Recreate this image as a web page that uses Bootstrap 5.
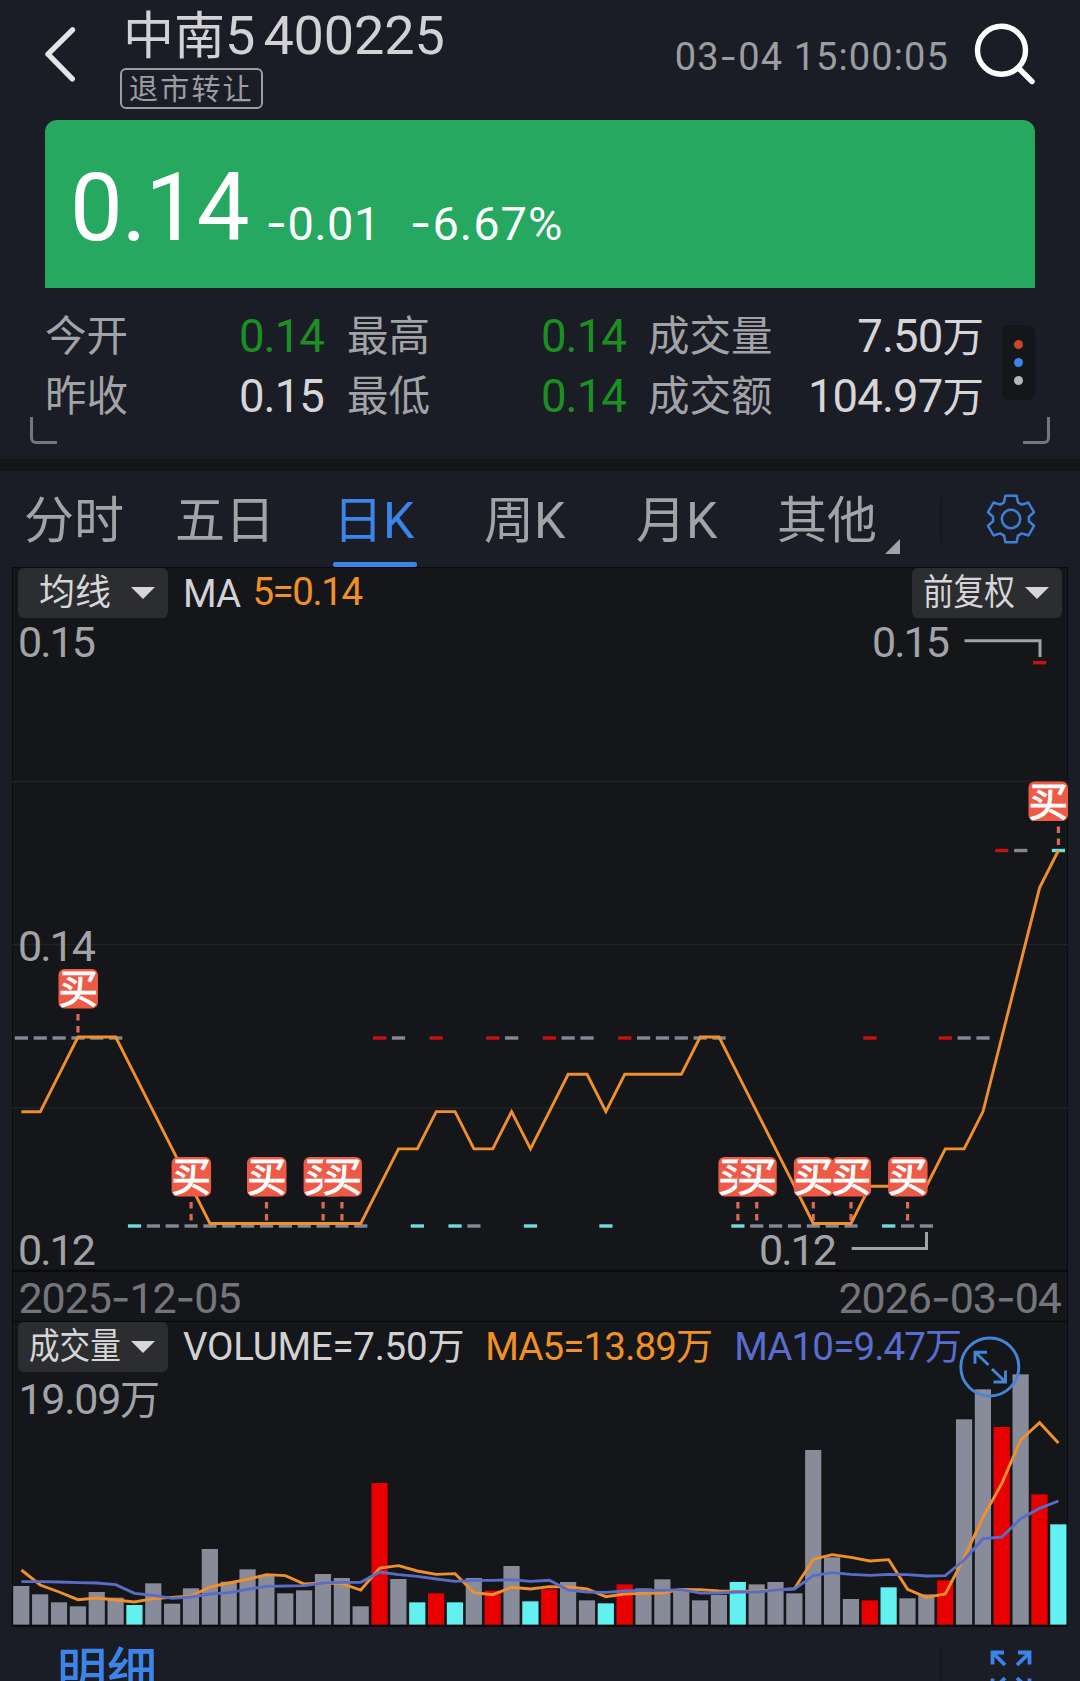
<!DOCTYPE html>
<html lang="zh-CN">
<head>
<meta charset="utf-8">
<meta name="viewport" content="width=device-width, initial-scale=1">
<title>中南5 400225</title>
<link href="https://cdn.jsdelivr.net/npm/bootstrap@5.3.0/dist/css/bootstrap.min.css" rel="stylesheet">
<style>
  body{background:#1b1d26;color:#d2d2d4;font-family:Roboto,"Noto Sans CJK SC",sans-serif;line-height:1;height:1681px;overflow:hidden}
  .screen{width:1080px;height:1681px}
  .dash{font-family:Inter,sans-serif}
  .top-bar{height:120px;padding:0 45px 0 44px}
  .back-icon{margin-top:26px}
  .title-col{margin-left:44px}
  .stock-name{font-size:51px;height:64px;line-height:72px;padding-left:3px;color:#d2d2d4;white-space:nowrap}
  .stock-name .num{font-size:54px}
  .stock-name .code{margin-left:8px;letter-spacing:-.1px}
  .stock-tag{width:143px;height:41px;margin-top:4px;border:2px solid #9c9da2;border-radius:6px;font-size:29px;letter-spacing:2.2px;line-height:40px;padding-left:7px;color:#9c9da2;white-space:nowrap}
  .clock{font-size:38px;letter-spacing:1.1px;color:#9c9da1;margin-top:37px;margin-right:24px;white-space:nowrap}
  .search-icon{margin-top:22px}
  .quote{height:168px;margin:0 45px;background:#26a861;border-radius:12px 12px 0 0;color:#fff;padding:0 0 0 25px}
  .quote .price{font-size:94px;letter-spacing:-1.2px;line-height:177px}
  .quote .chg{font-size:47px;letter-spacing:.4px;margin-left:17px}
  .quote .pct{font-size:47px;margin-left:29px;letter-spacing:1px}
  .stats{height:171px;padding:0 30px}
  .stats-inner{padding:19px 0 0 15px;height:148px}
  .stat-a{width:279px;margin-right:23px}
  .stat-b{width:279px;margin-right:22px}
  .stat-c{width:335px}
  .stat-line{height:60px}
  .lbl{font-size:41.5px;color:#a2a3a7}
  .val{font-size:45.5px;color:#d6d6d8;letter-spacing:-.9px}
  .val .wan{font-size:41.5px}
  .green-t{color:#1b8f22}
  .dots{width:33px;height:75px;margin:18px 0 0 19px;background:#15161a;border-radius:6px}
  .dots i{display:block;width:9.5px;height:9.5px;border-radius:50%;margin:4.25px auto}
  .corner{width:27px;height:27px;border-bottom:3px solid #75767b;margin-top:-19px}
  .corner.l{border-left:3px solid #75767b;border-bottom-left-radius:6px}
  .corner.r{border-right:3px solid #75767b;border-bottom-right-radius:6px}
  .band{height:12px;background:#15161a}
  .tabs{height:96px;font-size:50px;color:#a2a3a7;padding-left:24px}
  .tab{height:96px;line-height:100px;white-space:nowrap}
  .tab.on{color:#3d84e8;position:relative}
  .tab.on::after{content:"";position:absolute;left:0;width:84px;height:5px;bottom:0;border-radius:2px;background:#3d84e8}
  .vline{width:2px;height:45px;background:#15161a}
  .panel{width:1056px;margin-left:12px;background:#15161a;border:solid #0a0b0d;border-width:1px 1px 2px 1px;height:1060px}
  .p-head{height:50px;padding:0 5px}
  .pick{width:150px;height:50px;border-radius:6px;background:#2c2d31;color:#d6d6d8;font-size:36px;border:0;white-space:nowrap}
  .pick b{font-weight:400;display:block}
  .narrow{transform:scaleX(.85);transform-origin:0 50%;width:92px}
  .lg{font-size:38.5px;white-space:nowrap;letter-spacing:-.85px}
  .lg .wan{font-size:37px}
  .or{color:#f09125}.bl{color:#5a6dcf}
  .chart{display:block;margin-left:-1px}
  .foot-title{font-size:50px;font-weight:500;color:#3d84e8;margin:17px 0 0 57px;line-height:56px}
</style>
</head>
<body>
<div class="screen d-flex flex-column">
  <header class="top-bar d-flex align-items-start flex-shrink-0">
    <svg class="back-icon flex-shrink-0" width="32" height="58" viewBox="44 26 32 58"><path d="M72.5 29.8 48 54.2 72.3 78.8" fill="none" stroke="#e4e4e6" stroke-width="5.4" stroke-linecap="round" stroke-linejoin="round"/></svg>
    <div class="title-col">
      <div class="stock-name">中南<span class="num">5</span><span class="num code">400225</span></div>
      <div class="stock-tag">退市转让</div>
    </div>
    <div class="clock ms-auto">03<span class="dash">-</span>04 15:00:05</div>
    <svg class="search-icon flex-shrink-0" width="62" height="64" viewBox="973 22 62 64"><g fill="none" stroke="#fff" stroke-width="5.4" stroke-linecap="round"><circle cx="1001.5" cy="50.3" r="24"/><path d="M1019 68.5 1032 81.5"/></g></svg>
  </header>

  <section class="quote d-flex align-items-baseline flex-shrink-0">
    <div class="price">0.14</div><div class="chg"><span class="dash">-</span>0.01</div><div class="pct"><span class="dash">-</span>6.67%</div>
  </section>

  <section class="stats flex-shrink-0">
    <div class="stats-inner d-flex">
      <div class="stat-a">
        <div class="stat-line d-flex justify-content-between align-items-center"><span class="lbl">今开</span><span class="val green-t">0.14</span></div>
        <div class="stat-line d-flex justify-content-between align-items-center"><span class="lbl">昨收</span><span class="val">0.15</span></div>
      </div>
      <div class="stat-b">
        <div class="stat-line d-flex justify-content-between align-items-center"><span class="lbl">最高</span><span class="val green-t">0.14</span></div>
        <div class="stat-line d-flex justify-content-between align-items-center"><span class="lbl">最低</span><span class="val green-t">0.14</span></div>
      </div>
      <div class="stat-c">
        <div class="stat-line d-flex justify-content-between align-items-center"><span class="lbl">成交量</span><span class="val">7.50<span class="wan">万</span></span></div>
        <div class="stat-line d-flex justify-content-between align-items-center"><span class="lbl">成交额</span><span class="val">104.97<span class="wan">万</span></span></div>
      </div>
      <div class="dots d-flex flex-column justify-content-center"><i style="background:#c8452f"></i><i style="background:#3d84e8"></i><i style="background:#b4b5ba"></i></div>
    </div>
    <div class="d-flex justify-content-between pt-0"><div class="corner l"></div><div class="corner r"></div></div>
  </section>
  <div class="band flex-shrink-0"></div>

  <nav class="tabs d-flex align-items-center flex-shrink-0">
    <div class="tab" style="width:151px">分时</div>
    <div class="tab" style="width:158px">五日</div>
    <div class="tab on" style="width:151px">日K</div>
    <div class="tab" style="width:152px">周K</div>
    <div class="tab" style="width:141px">月K</div>
    <div class="tab d-flex" style="width:163px">其他<svg class="ms-2" width="15" height="96" viewBox="886 471 15 96"><path d="M901 539v15h-15z" fill="#a2a3a7"/></svg></div>
    <div class="vline"></div>
    <svg class="ms-auto" style="margin-right:43px" width="52" height="54" viewBox="-26 -27 52 54"><g id="gear" fill="none" stroke="#3f7fd6" stroke-width="2.5" stroke-linejoin="round"><circle r="9.2"/></g></svg>
  </nav>

  <main class="panel flex-shrink-0">
    <div class="p-head d-flex align-items-start">
      <div class="pick d-flex align-items-center"><b style="margin:0 20px 0 21px">均线</b><svg width="24" height="12"><path d="M0 0h24L12 12z" fill="#d6d6d8"/></svg></div>
      <div class="lg" style="margin:7px 0 0 15px">MA</div><div class="lg or" style="margin:5px 0 0 12px;letter-spacing:-1.4px">5=0.14</div>
      <div class="pick d-flex align-items-center ms-auto"><b class="narrow" style="margin:0 10px 0 11px">前复权</b><svg width="24" height="12"><path d="M0 0h24L12 12z" fill="#d6d6d8"/></svg></div>
    </div>
    <svg id="kline" class="chart" width="1056" height="704" viewBox="12 618 1056 704" font-family="Roboto,'Noto Sans CJK SC',sans-serif"></svg>
    <div class="p-head d-flex align-items-start">
      <div class="pick d-flex align-items-center"><b class="narrow" style="margin:0 10px 0 11px">成交量</b><svg width="24" height="12"><path d="M0 0h24L12 12z" fill="#d6d6d8"/></svg></div>
      <div class="lg" style="margin:6px 0 0 15px;letter-spacing:-.25px">VOLUME=7.50<span class="wan">万</span></div>
      <div class="lg or" style="margin:6px 0 0 21px">MA5=13.89<span class="wan">万</span></div>
      <div class="lg bl" style="margin:6px 0 0 22px">MA10=9.47<span class="wan">万</span></div>
    </div>
    <svg id="vol" class="chart" width="1056" height="253" viewBox="12 1372 1056 253" overflow="visible" font-family="Roboto,'Noto Sans CJK SC',sans-serif"></svg>
  </main>

  <footer class="d-flex align-items-start">
    <div class="foot-title">明细</div>
    <div class="vline ms-auto" style="margin-top:21px"></div>
    <svg style="margin:21px 46px 0 46px" width="46" height="46" viewBox="988 1648 46 46"><g fill="none" stroke="#3d84e8" stroke-width="3.8"><path d="M1005 1665 993 1653M1004 1652.500h-11.500v12M1017 1665l12.500-12M1018 1652.500h11.500v12M1005 1678l-12 12M1004 1690.500h-11.500v-12M1017 1678l12.500 12M1018 1690.500h11.500v-12"/></g></svg>
  </footer>
</div>

<script src="https://cdn.jsdelivr.net/npm/bootstrap@5.3.0/dist/js/bootstrap.bundle.min.js"></script>
<script>
const X = i => 21.4 + 18.855 * i;
const COL = {g:'#888b99', r:'#e80000', c:'#63f0f0'};
const DCOL = {g:'#858894', r:'#c81114', c:'#6fdcdc'};

// gear outline: six flat teeth
(() => {
  const p = [];
  for (let k = 0; k < 6; k++) {
    const a = k * 60 - 90;
    [[18,-23],[24,-13.5],[24,13.5],[18,23]].forEach(([r, d]) => {
      const t = (a + d) * Math.PI / 180;
      p.push((r * Math.cos(t)).toFixed(1) + ' ' + (r * Math.sin(t)).toFixed(1));
    });
  }
  document.getElementById('gear').insertAdjacentHTML('beforeend', '<path d="M' + p.join('L') + 'Z"/>');
})();

// daily candles: price level and direction
const lv = [], dir = [];
const put = (from, to, l, d) => { for (let i = from; i <= to; i++) { lv[i] = l; dir[i] = d; } };
put(0,5,1,'g'); put(6,6,0,'c'); put(7,18,0,'g'); put(19,19,1,'r'); put(20,20,1,'g'); put(21,21,0,'c');
put(22,22,1,'r'); put(23,23,0,'c'); put(24,24,0,'g'); put(25,25,1,'r'); put(26,26,1,'g'); put(27,27,0,'c');
put(28,28,1,'r'); put(29,30,1,'g'); put(31,31,0,'c'); put(32,32,1,'r'); put(33,37,1,'g'); put(38,38,0,'c');
put(39,44,0,'g'); put(45,45,1,'r'); put(46,46,0,'c'); put(47,48,0,'g'); put(49,49,1,'r'); put(50,51,1,'g');
put(52,52,2,'r'); put(53,53,2,'g'); put(54,54,3,'r'); put(55,55,2,'c');

const Y = [1226, 1038, 850.5, 662.7];
let s = '';
[781.5, 944.5, 1108].forEach(y => s += `<path d="M12 ${y}H1068" stroke="#222327" stroke-width="1.4"/>`);
s += '<path d="M12 1270.800H1068M12 1322H1068" stroke="#08090b" stroke-width="2"/>';
lv.forEach((l, i) => s += `<rect x="${X(i)-6.6}" y="${Y[l]-1.7}" width="13.200" height="3.400" fill="${DCOL[dir[i]]}"/>`);
const ma = lv.map((_, i) => i < 2 ? 1111.8 : i == 2 ? 1074.4 : i == 3 ? 1037 :
  1223.5 - 37.3 * (lv[i] + lv[i-1] + lv[i-2] + lv[i-3] + lv[i-4]));
const line = (a, c) => `<polyline points="${a.map((y, i) => X(i) + ',' + y).join(' ')}" fill="none" stroke="${c}" stroke-width="2.900"/>`;
const buys = [3, 9, 13, 16, 17, 38, 39, 42, 44, 47, 55];
buys.forEach(i => s += `<path d="M${X(i)} ${Y[lv[i]]-24}v19" stroke="#d9685a" stroke-width="3.200" stroke-dasharray="6.500 5.500"/>`);
s += line(ma, '#ef902c');
buys.forEach(i => {
  const x = Math.min(X(i), 1048) - 19.5, y = Y[lv[i]] - 69;
  s += `<rect x="${x}" y="${y}" width="39.500" height="39.500" rx="6" fill="#ee5a45"/><text x="${x+19.7}" y="${y+34.3}" font-size="39.500" fill="#fff" stroke="#fff" stroke-width=".9" text-anchor="middle">买</text>`;
});
const T = (x, y, w, t, c, f) => `<text x="${x}" y="${y}" font-size="${f||43}" textLength="${w}" fill="${c}">${t}</text>`;
const G = '#a2a3a7', D = '<tspan font-family="Inter">-</tspan>';
s += T(18,656.7,78,'0.15',G) + T(18,961.3,78,'0.14',G) + T(18,1265,78,'0.12',G)
   + T(872,657,78,'0.15',G) + T(759,1265,78,'0.12',G)
   + T(18.5,1312.7,223,`2025${D}12${D}05`,'#75767b') + T(838.5,1312.7,223.5,`2026${D}03${D}04`,'#75767b');
s += `<path d="M964.500 640.700H1040V657M851.700 1248.500H926.500V1232" fill="none" stroke="${G}" stroke-width="3"/>`;
document.getElementById('kline').innerHTML = s;

// volume bars, in thirds of a pixel below the panel top
const vol = [828,853,877,889,846,863,885,820,881,835,717,815,778,795,850,841,792,804,889,519,807,877,850,877,804,842,768,874,838,816,871,880,823,835,808,838,871,855,816,823,816,850,420,742,867,871,832,865,853,811,328,238,351,193,553,643];
const m5 = [780,825,846,869,864,870,876,866,862,858,831,819,808,794,797,822,819,821,840,774,767,783,793,791,848,854,832,837,830,831,837,860,852,850,849,838,839,843,844,843,840,836,748,734,742,753,749,838,862,852,743,622,520,390,338,399];
const m10 = [815,815,816,818,819,824,850,856,865,861,852,848,838,829,828,827,819,817,817,786,794,799,807,814,811,811,809,814,811,840,846,847,843,841,841,839,849,849,846,846,840,837,797,788,793,796,793,794,798,797,750,686,681,626,595,573];
const V = v => 1310 + v / 3;
let q = '';
vol.forEach((v, i) => q += `<rect x="${X(i)-8.2}" y="${V(v)}" width="16.200" height="${1624.6-V(v)}" fill="${COL[dir[i]]}"/>`);
q += line(m5.map(V), '#ef902c') + line(m10.map(V), '#5a6dc6');
q += `<text x="18.500" y="1413.500" font-size="43" letter-spacing="-1.300" fill="${G}">19.09<tspan font-size="40">万</tspan></text>`;
q += '<g fill="none" stroke="#4385d6" stroke-width="2.900"><circle cx="989.800" cy="1367" r="29"/><path d="M988.500 1365 975.500 1352.500M987 1352.200h-12v11.500M992 1369l13 12.500M993.500 1382h12v-11.500"/></g>';
document.getElementById('vol').innerHTML = q;
</script>
</body>
</html>
